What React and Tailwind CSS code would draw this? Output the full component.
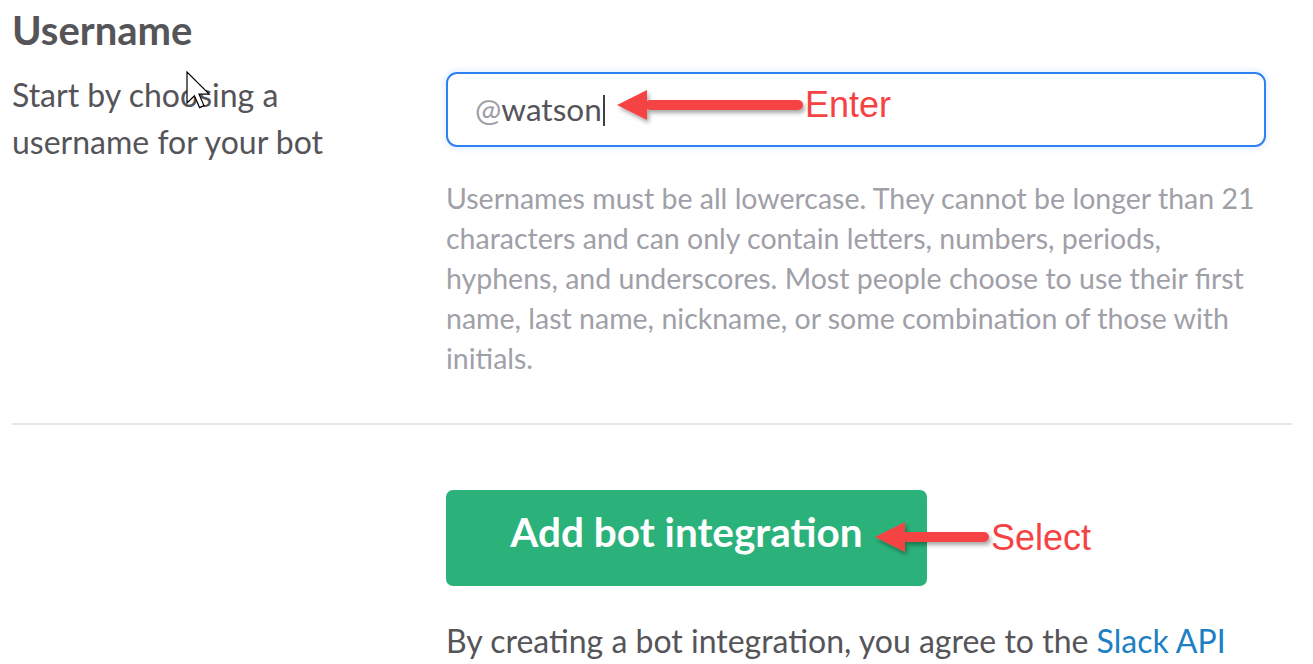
import React from "react";

const Arrow = ({ className, width, height, tipY, headBack, headHalf, shaftHalf, end }) => (
  <svg className={className} width={width} height={height} viewBox={`0 0 ${width} ${height}`}>
    <defs>
      <filter id="arrowShadow" x="-10%" y="-30%" width="130%" height="180%">
        <feDropShadow dx="2" dy="3" stdDeviation="2" floodColor="#000" floodOpacity="0.35" />
      </filter>
    </defs>
    <g filter="url(#arrowShadow)" fill="#f54343">
      <polygon points={`2,${tipY} ${headBack},${tipY - headHalf} ${headBack},${tipY + headHalf}`} />
      <rect
        x={headBack - 2}
        y={tipY - shaftHalf}
        width={end - headBack + 2}
        height={shaftHalf * 2}
        rx={shaftHalf}
      />
    </g>
  </svg>
);

const Cursor = () => (
  <svg className="absolute left-[186px] top-[71px]" width="26" height="38" viewBox="0 0 13 19">
    <path
      d="M0.5 0.5 L0.5 16 L4.2 12.4 L6.8 18.3 L9 17.3 L6.5 11.6 L11.6 11.6 Z"
      fill="#fff"
      stroke="#000"
      strokeWidth="0.6"
      strokeLinejoin="miter"
    />
  </svg>
);

export default function App() {
  return (
    <div className="relative w-[1313px] h-[664px] overflow-hidden bg-white font-['Lato','Noto_Sans',sans-serif] text-[#555459]">
      <div className="pl-[12px] pr-[21px] pt-[6px]">
        <h2 className="text-[40px] leading-[49px] font-bold">Username</h2>

        <div className="flex mt-[17px]">
          <div className="w-[434px] shrink-0">
            <p className="text-[32px] leading-[47px] max-w-[330px] -mt-[1px]">
              Start by choosing a username for your bot
            </p>
          </div>
          <div className="w-[820px]">
            <div className="h-[75px] rounded-[11px] border-2 border-[#2d80f5] shadow-[0_0_6px_2px_rgba(45,128,245,0.12)] flex items-center pl-[27px] pt-[1px] text-[31.5px]">
              <span className="text-[#9e9ea6]">@</span>
              <span>watson</span>
              <span className="w-[2px] h-[31px] bg-[#3f3f44] ml-[1px]" />
            </div>
            <p className="mt-[31px] text-[28.5px] leading-[40px] text-[#a0a0a8]">
              Usernames must be all lowercase. They cannot be longer than 21 characters and can only
              contain letters, numbers, periods, hyphens, and underscores. Most people choose to use
              their first name, last name, nickname, or some combination of those with initials.
            </p>
          </div>
        </div>

        <div className="mt-[45px] h-[2px] bg-[#e8e8e8]" />

        <div className="pl-[434px] pt-[65px]">
          <button className="w-[481px] h-[96px] rounded-[7px] bg-[#2bb27a] text-white text-[40.5px] font-bold pb-[11px]">
            Add bot integration
          </button>
          <p className="mt-[35px] text-[32px] leading-[40px] whitespace-nowrap">
            By creating a bot integration, you agree to the{" "}
            <span className="text-[#1d7fc4]">Slack API</span>
          </p>
        </div>
      </div>

      <Arrow
        className="absolute left-[615px] top-[86px]"
        width={195}
        height={40}
        tipY={19}
        headBack={32}
        headHalf={15}
        shaftHalf={5}
        end={188}
      />
      <span className="absolute left-[805px] top-[85px] font-['Liberation_Sans',sans-serif] text-[36px] leading-[40px] text-[#f54343]">
        Enter
      </span>

      <Arrow
        className="absolute left-[873px] top-[518px]"
        width={122}
        height={40}
        tipY={19}
        headBack={32}
        headHalf={15}
        shaftHalf={5}
        end={116}
      />
      <span className="absolute left-[991px] top-[518px] font-['Liberation_Sans',sans-serif] text-[36px] leading-[40px] text-[#f54343]">
        Select
      </span>

      <Cursor />
    </div>
  );
}
